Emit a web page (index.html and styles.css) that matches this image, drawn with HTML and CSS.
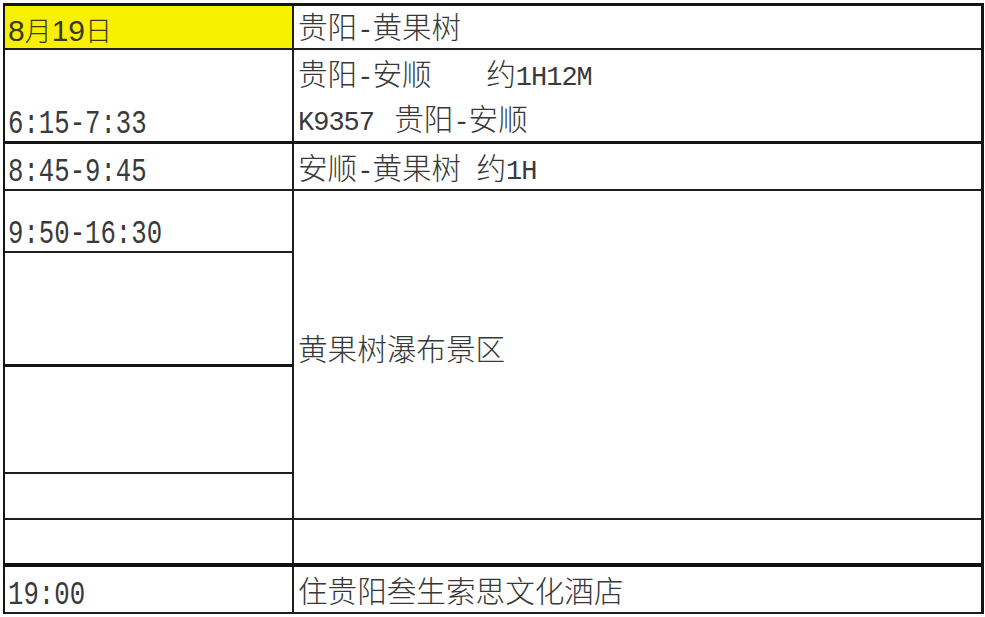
FILE: index.html
```html
<!DOCTYPE html>
<html lang="zh">
<head>
<meta charset="utf-8">
<title>8月19日 行程</title>
<link rel="stylesheet" href="styles.css">
</head>
<body>
<div class="sheet">
  <div class="cell left date b2"><div class="txt dt">8<span class="zd">月</span>19<span class="zd">日</span></div></div>
  <div class="cell right b2"><div class="txt"><span class="zh">贵阳</span>-<span class="zh">黄果树</span></div></div>

  <div class="cell left b3"><div class="txt">6:15-7:33</div></div>
  <div class="cell right b3 two">
    <div class="txt"><span class="zh">贵阳</span>-<span class="zh">安顺</span>   <span class="zh wide">约</span>1H12M</div>
    <div class="txt">K9357 <span class="zh gap">贵阳</span>-<span class="zh">安顺</span></div>
  </div>

  <div class="cell left b2"><div class="txt">8:45-9:45</div></div>
  <div class="cell right b2"><div class="txt"><span class="zh">安顺</span>-<span class="zh">黄果树</span> <span class="zh">约</span>1H</div></div>

  <div class="cell left b2"><div class="txt">9:50-16:30</div></div>
  <div class="cell right b2 merged"><div class="txt"><span class="zh">黄果树瀑布景区</span></div></div>
  <div class="cell left b3"></div>
  <div class="cell left b2"></div>
  <div class="cell left b2"></div>

  <div class="cell left b4"></div>
  <div class="cell right b4"></div>

  <div class="cell left b2"><div class="txt">19:00</div></div>
  <div class="cell right b2"><div class="txt"><span class="zh">住贵阳叁生索思文化酒店</span></div></div>
</div>
</body>
</html>
```
FILE: styles.css
```css
html, body {
  margin: 0;
  padding: 0;
  background: #ffffff;
}

.sheet {
  box-sizing: border-box;
  margin: 3px 0 0 3px;
  width: 981px;
  display: grid;
  grid-template-columns: 289px 1fr;
  grid-template-rows: 44px 94px 47px 62px 114px 107px 46px 47px 47px;
  border-top: 3px solid #151515;
  border-left: 2px solid #151515;
  border-right: 3px solid #151515;
  color: #3a3a3a;
  font-family: "Liberation Mono", "Noto Sans CJK SC", monospace;
}

.cell {
  box-sizing: border-box;
  display: flex;
  flex-direction: column;
  justify-content: flex-end;
}

.txt {
  white-space: pre;
}

/* left column: tall, narrow monospace time values */
.left {
  border-right: 2px solid #1e1e1e;
  padding-left: 3px;
}

.left .txt {
  font-size: 33px;
  line-height: 33px;
  transform: scaleX(0.778);
  transform-origin: left bottom;
}

/* right column: CJK text mixed with half-width ASCII */
.right {
  padding-left: 4px;
}

.right .txt {
  font-size: 27px;
  line-height: 34px;
  letter-spacing: -1px;
}

.b2 { border-bottom: 2px solid #1e1e1e; }
.b3 { border-bottom: 3px solid #151515; }
.b4 { border-bottom: 4px solid #111111; }

.date {
  background: #f7f100;
  color: #3a3910;
  padding-left: 3px;
}

.left .dt {
  font-family: "Liberation Sans", "Noto Sans CJK SC", sans-serif;
  font-size: 30px;
  line-height: 35px;
  letter-spacing: 0;
  transform: none;
}

.zd {
  font-family: "Noto Sans CJK SC", sans-serif;
  font-size: 27px;
  font-weight: 300;
}

.zh {
  font-family: "Noto Sans CJK SC", sans-serif;
  font-size: 29.6px;
  font-weight: 300;
  letter-spacing: 0;
  color: #383838;
}

.gap {
  margin-left: 5px;
}

.wide {
  margin-left: 9px;
}

.two {
  gap: 16px;
  padding-bottom: 6px;
}

.right.two .txt {
  line-height: 24px;
}

.merged {
  grid-row: span 4;
  justify-content: center;
  padding-bottom: 8px;
}
```
